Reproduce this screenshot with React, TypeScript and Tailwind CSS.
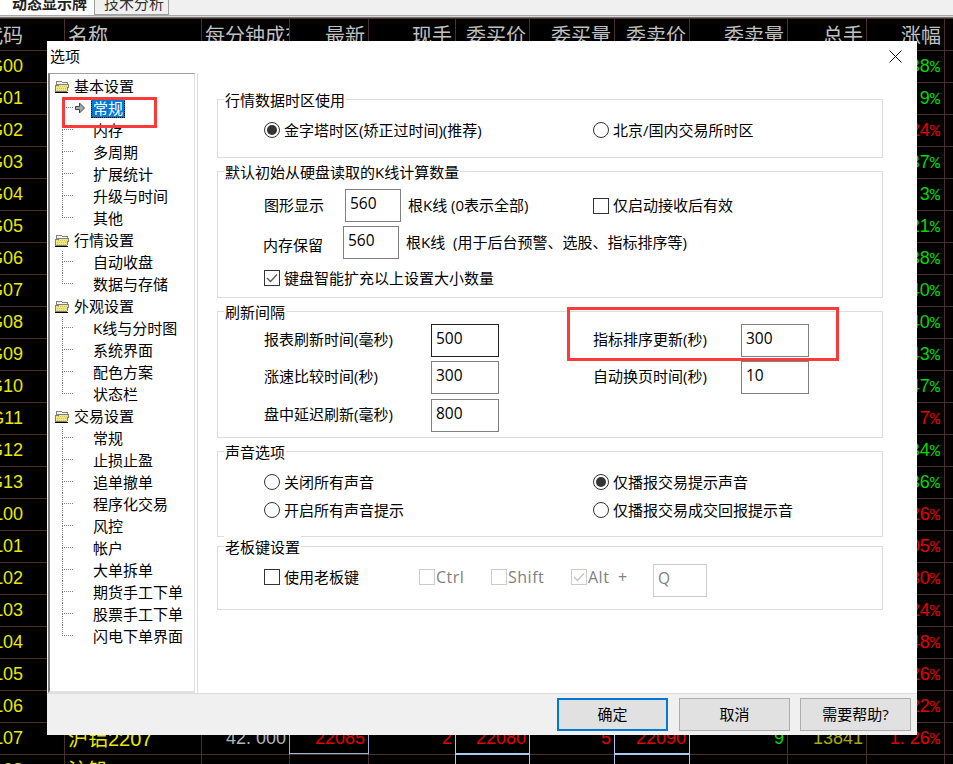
const rowClass =
  "grid grid-cols-[65px_137px_88px_79px_87px_74px_85px_75px_98px_79px_78px_8px] h-[32px] font-['Liberation_Sans','Noto_Sans_CJK_SC',sans-serif] text-[18px]";
const cellClass =
  "relative flex items-center justify-end pr-[3px] overflow-hidden whitespace-nowrap border-r border-b border-[#4a3026]";

const labels = [
  "G00", "G01", "G02", "G03", "G04", "G05", "G06", "G07", "G08", "G09", "G10", "G11", "G12", "G13",
  "L00", "L01", "L02", "L03", "L04", "L05", "L06",
];
const changes: [string, boolean][] = [
  ["0. 38", true], ["0. 9", true], ["0. 24", false], ["0. 37", true], ["0. 3", true], ["0. 21", true], ["0. 38", true],
  ["0. 40", true], ["0. 40", true], ["0. 43", true], ["0. 47", true], ["0. 7", false], ["0. 34", true], ["0. 36", true],
  ["0. 26", false], ["1. 05", false], ["1. 30", false], ["1. 24", false], ["1. 48", false], ["1. 26", false], ["1. 22", false],
];

function Pct({ value, up }: { value: string; up: boolean }) {
  return (
    <span className={`pr-[1px] ${up ? "text-[#00d800]" : "text-[#e60000]"}`}>
      {value}
      <span className="font-['Liberation_Mono',monospace] text-[17px]">%</span>
    </span>
  );
}

function Market() {
  const heads = ["每分钟成交", "最新", "现手", "委买价", "委买量", "委卖价", "委卖量", "总手", "涨幅"];
  return (
    <div>
      <div className="flex h-[15px] bg-[#f0f0f0] overflow-hidden text-[15px] font-['Noto_Sans_CJK_SC',sans-serif]">
        <div className="w-[94px] bg-white pl-[12px] font-bold text-[#222] leading-[6px]">动态显示牌</div>
        <div className="w-[75px] border-x border-b border-[#a0a0a0] pl-[9px] text-[#333] leading-[6px]">技术分析</div>
      </div>
      <div className="h-[1px] bg-[#a8a8a8]" />
      <div className="h-[1px] bg-[#d8d8d8]" />
      <div className="h-[1px] bg-[#707070]" />
      <div className="bg-black">
        <div className={`${rowClass} h-[33px] border-t border-[#4a3026] text-[#c0c0c0] text-[20px] font-['Noto_Sans_CJK_SC',sans-serif]`}>
          <div className={`${cellClass} pr-[41px]`}>代码</div>
          <div className={`${cellClass} justify-start pl-[3px]`}>名称</div>
          <div className={`${cellClass} justify-start pl-[3px]`}>{heads[0]}</div>
          {heads.slice(1).map((h) => (
            <div key={h} className={cellClass}>{h}</div>
          ))}
          <div className="border-b border-[#4a3026]" />
        </div>
        {labels.map((label, i) => (
          <div key={label} className={rowClass}>
            <div className={`${cellClass} pr-[41px] text-[#e8e800]`}>{label}</div>
            {Array.from({ length: 9 }).map((_, j) => (
              <div key={j} className={cellClass} />
            ))}
            <div className={cellClass}>
              <Pct value={changes[i][0]} up={changes[i][1]} />
            </div>
            <div className="border-b border-[#4a3026]" />
          </div>
        ))}
        <div className={rowClass}>
          <div className={`${cellClass} pr-[41px] text-[#e8e800]`}>L07</div>
          <div className={`${cellClass} justify-start pl-[3px] text-[#e8e800] text-[20px]`}>沪铝2207</div>
          <div className={`${cellClass} text-[#b4b4b4]`}>42. 000</div>
          <div className={`${cellClass} -ml-px border-l border-l-[#9fb4cc] border-r-[#9fb4cc] shadow-[inset_0_-1px_0_#9fb4cc] text-[#e60000]`}>22085</div>
          <div className={`${cellClass} text-[#e60000]`}>2</div>
          <div className={`${cellClass} -ml-px border-l border-[#a9c9ee] border-b-2 text-[#e60000]`}>22080</div>
          <div className={`${cellClass} text-[#e60000]`}>5</div>
          <div className={`${cellClass} -ml-px border-l border-[#a9c9ee] border-b-2 text-[#e60000]`}>22090</div>
          <div className={`${cellClass} text-[#00d800]`}>9</div>
          <div className={`${cellClass} text-[#a8a800]`}>13841</div>
          <div className={cellClass}><Pct value="1. 26" up={false} /></div>
          <div className="border-b border-[#4a3026]" />
        </div>
        <div className={rowClass}>
          <div className={`${cellClass} pr-[41px] text-[#e8e800]`}>L08</div>
          <div className={`${cellClass} justify-start pl-[3px] text-[#e8e800] text-[20px]`}>沪铅2207</div>
          <div className={cellClass} />
          <div className={cellClass} />
          <div className={cellClass} />
          <div className={`${cellClass} -ml-px border-l border-[#a9c9ee]`} />
          <div className={cellClass} />
          <div className={`${cellClass} -ml-px border-l border-[#a9c9ee]`} />
          <div className={cellClass} />
          <div className={cellClass} />
          <div className={cellClass} />
        </div>
      </div>
    </div>
  );
}

function FolderIcon() {
  return (
    <svg width="16" height="14" viewBox="0 0 16 14" shapeRendering="crispEdges" className="shrink-0">
      <path d="M2 2h5l1 1h5v2H4L2 8z" fill="#f4f4f4" stroke="#808080" />
      <path d="M1 12V6h3V5h11l-2 7z" fill="#ece888" stroke="#808080" />
      <path d="M4 7h9M3 9h9M3 11h9" stroke="#d8c840" strokeDasharray="1 1" />
      <path d="M1 13h13" stroke="#000" />
    </svg>
  );
}

type TreeChild = { label: string; selected?: boolean };
const tree: { label: string; items: TreeChild[] }[] = [
  {
    label: "基本设置",
    items: [{ label: "常规", selected: true }, { label: "内存" }, { label: "多周期" }, { label: "扩展统计" }, { label: "升级与时间" }, { label: "其他" }],
  },
  { label: "行情设置", items: [{ label: "自动收盘" }, { label: "数据与存储" }] },
  { label: "外观设置", items: [{ label: "K线与分时图" }, { label: "系统界面" }, { label: "配色方案" }, { label: "状态栏" }] },
  {
    label: "交易设置",
    items: [
      { label: "常规" }, { label: "止损止盈" }, { label: "追单撤单" }, { label: "程序化交易" }, { label: "风控" }, { label: "帐户" },
      { label: "大单拆单" }, { label: "期货手工下单" }, { label: "股票手工下单" }, { label: "闪电下单界面" },
    ],
  },
];

function Tree() {
  return (
    <div className="ml-[1px] w-[147px] shrink-0 pt-[1px] border-l-2 border-t border-r border-b-2 border-l-[#808080] border-t-[#a0a0a0] border-r-[#e0e0e0] border-b-[#e0e0e0]">
      {tree.map((group) => (
        <div key={group.label}>
          <div className="flex items-center h-[22px] ml-[4px] gap-[4px]">
            <FolderIcon />
            <span>{group.label}</span>
          </div>
          {group.items.map((item, i) => (
            <div key={i} className="flex items-center h-[22px] ml-[12px]">
              <div className="w-[11px] h-full shrink-0">
                <div className="h-[11px] border-l border-b border-dotted border-[#808080]" />
                {i < group.items.length - 1 && <div className="h-[11px] border-l border-dotted border-[#808080]" />}
              </div>
              <div className="w-[20px] shrink-0 pl-[2px]">
                {item.selected && (
                  <svg width="11" height="12" viewBox="0 0 11 12" className="block">
                    <path d="M0.5 4.5H4.5V1L9.5 6L4.5 11V7.5H0.5z" fill="#a8a8a8" stroke="#444" />
                  </svg>
                )}
              </div>
              {item.selected ? (
                <span className="-ml-[2px] h-[20px] leading-[18px] px-[1px] border border-dotted border-black bg-[#0078d7] text-white">
                  {item.label}
                </span>
              ) : (
                <span>{item.label}</span>
              )}
            </div>
          ))}
        </div>
      ))}
    </div>
  );
}

function Group({ title, className, children }: { title: string; className: string; children: React.ReactNode }) {
  return (
    <div className={`relative ml-[19px] w-[666px] border border-[#dcdcdc] ${className}`}>
      <div className="absolute left-[6px] -top-[11px] px-[1px] bg-white leading-[22px]">{title}</div>
      {children}
    </div>
  );
}

function Radio({ checked, label }: { checked?: boolean; label: string }) {
  return (
    <div className="flex items-center gap-[4px] h-[16px]">
      <span className="flex items-center justify-center w-[16px] h-[16px] rounded-full border border-[#333] shrink-0">
        {checked && <span className="w-[10px] h-[10px] rounded-full bg-[#333]" />}
      </span>
      <span>{label}</span>
    </div>
  );
}

function Check({ checked, disabled, label }: { checked?: boolean; disabled?: boolean; label: string }) {
  return (
    <div className={`flex items-center h-[16px] ${disabled ? "gap-[1px] text-[#808080] text-[16px] tracking-[0.5px] [word-spacing:4px]" : "gap-[4px]"}`}>
      <span className={`flex items-center justify-center w-[16px] h-[16px] border shrink-0 ${disabled ? "border-[#cccccc]" : "border-[#333]"}`}>
        {checked && (
          <svg width="14" height="14" viewBox="0 0 14 14" fill="none" stroke={disabled ? "#c4c4c4" : "#555"} strokeWidth="1.3">
            <path d="M2 7L5.5 10.5L12 3.5" />
          </svg>
        )}
      </span>
      <span>{label}</span>
    </div>
  );
}

function Field({ value, className }: { value: string; className: string }) {
  return <div className={`h-[33px] shrink-0 border pl-[4px] pt-[2px] text-[15.5px] leading-[22px] ${className}`}>{value}</div>;
}

function Options() {
  return (
    <div className="flex-1 border-l border-[#dcdcdc] pt-[26px]">
      <Group title="行情数据时区使用" className="h-[59px]">
        <div className="flex pt-[22px] pl-[46px]">
          <div className="w-[329px]"><Radio checked label="金字塔时区(矫正过时间)(推荐)" /></div>
          <Radio label="北京/国内交易所时区" />
        </div>
      </Group>

      <Group title="默认初始从硬盘读取的K线计算数量" className="h-[127px] mt-[13px]">
        <div className="flex items-center pt-[17px] pl-[46px]">
          <span className="w-[81px]">图形显示</span>
          <Field value="560" className="w-[56px] border-[#808080]" />
          <span className="w-[192px] pl-[7px]">根K线 (0表示全部)</span>
          <Check label="仅启动接收后有效" />
        </div>
        <div className="flex items-center mt-[4px] pl-[45px]">
          <span className="w-[80px] mt-[5px]">内存保留</span>
          <Field value="560" className="w-[56px] border-[#808080]" />
          <span className="pl-[7px]">根K线&nbsp; (用于后台预警、选股、指标排序等)</span>
        </div>
        <div className="mt-[11px] pl-[46px]">
          <Check checked label="键盘智能扩充以上设置大小数量" />
        </div>
      </Group>

      <Group title="刷新间隔" className="h-[127px] mt-[13px]">
        <div className="flex items-center pt-[12px] pl-[46px]">
          <span className="w-[167px] -mt-[2px]">报表刷新时间(毫秒)</span>
          <Field value="500" className="w-[68px] border-[#222]" />
          <span className="w-[148px] ml-[94px] -mt-[2px]">指标排序更新(秒)</span>
          <Field value="300" className="w-[68px] border-[#808080]" />
        </div>
        <div className="flex items-center mt-[4px] pl-[46px]">
          <span className="w-[167px] -mt-[2px]">涨速比较时间(秒)</span>
          <Field value="300" className="w-[68px] border-[#808080]" />
          <span className="w-[148px] ml-[94px] -mt-[2px]">自动换页时间(秒)</span>
          <Field value="10" className="w-[68px] border-[#808080]" />
        </div>
        <div className="flex items-center mt-[5px] pl-[46px]">
          <span className="w-[167px] -mt-[2px]">盘中延迟刷新(毫秒)</span>
          <Field value="800" className="w-[68px] border-[#808080]" />
        </div>
      </Group>

      <Group title="声音选项" className="h-[86px] mt-[13px]">
        <div className="flex pt-[22px] pl-[46px]">
          <div className="w-[329px]"><Radio label="关闭所有声音" /></div>
          <Radio checked label="仅播报交易提示声音" />
        </div>
        <div className="flex mt-[12px] pl-[46px]">
          <div className="w-[329px]"><Radio label="开启所有声音提示" /></div>
          <Radio label="仅播报交易成交回报提示音" />
        </div>
      </Group>

      <Group title="老板键设置" className="h-[64px] mt-[9px]">
        <div className="flex items-start pt-[17px] pl-[46px]">
          <div className="w-[155px] mt-[5px]"><Check label="使用老板键" /></div>
          <div className="w-[72px] mt-[5px]"><Check disabled label="Ctrl" /></div>
          <div className="w-[80px] mt-[5px]"><Check disabled label="Shift" /></div>
          <div className="w-[82px] mt-[5px]"><Check checked disabled label="Alt +" /></div>
          <Field value="Q" className="w-[54px] border-[#cccccc] text-[#808080]" />
        </div>
      </Group>
    </div>
  );
}

function Dialog() {
  return (
    <div className="absolute left-[47px] top-[41px] w-[870px] h-[694px] flex flex-col bg-white text-[15px] text-black font-['Open_Sans','Noto_Sans_CJK_SC',sans-serif]">
      <div className="flex items-center justify-between h-[32px] pl-[3px] pr-[15px]">
        <span className="-mt-[1px]">选项</span>
        <svg width="13" height="13" viewBox="0 0 13 13" stroke="#111" strokeWidth="1" className="-mt-[2px]">
          <path d="M0.5 0.5L12.5 12.5M12.5 0.5L0.5 12.5" />
        </svg>
      </div>
      <div className="flex h-[620px]">
        <Tree />
        <div className="w-[2px] shrink-0" />
        <Options />
      </div>
      <div className="flex items-center justify-end gap-[10px] flex-1 pr-[6px] bg-[#f0f0f0] border-t border-[#dcdcdc]">
        <div className="flex items-center justify-center w-[111px] h-[33px] mr-[1px] border-2 border-[#0078d7] bg-[#e1e1e1]">确定</div>
        <div className="flex items-center justify-center w-[111px] h-[33px] border border-[#adadad] bg-[#e1e1e1]">取消</div>
        <div className="flex items-center justify-center w-[111px] h-[33px] border border-[#adadad] bg-[#e1e1e1]">需要帮助?</div>
      </div>
    </div>
  );
}

export default function App() {
  return (
    <div className="relative w-[953px] h-[764px] overflow-hidden bg-black">
      <Market />
      <Dialog />
      {/* red marks drawn over the screenshot */}
      <div className="absolute left-[62px] top-[97px] w-[95px] h-[31px] border-[3px] border-[#fb3a3a]" />
      <div className="absolute left-[567px] top-[307px] w-[272px] h-[54px] border-[3px] border-[#fb3a3a]" />
    </div>
  );
}
